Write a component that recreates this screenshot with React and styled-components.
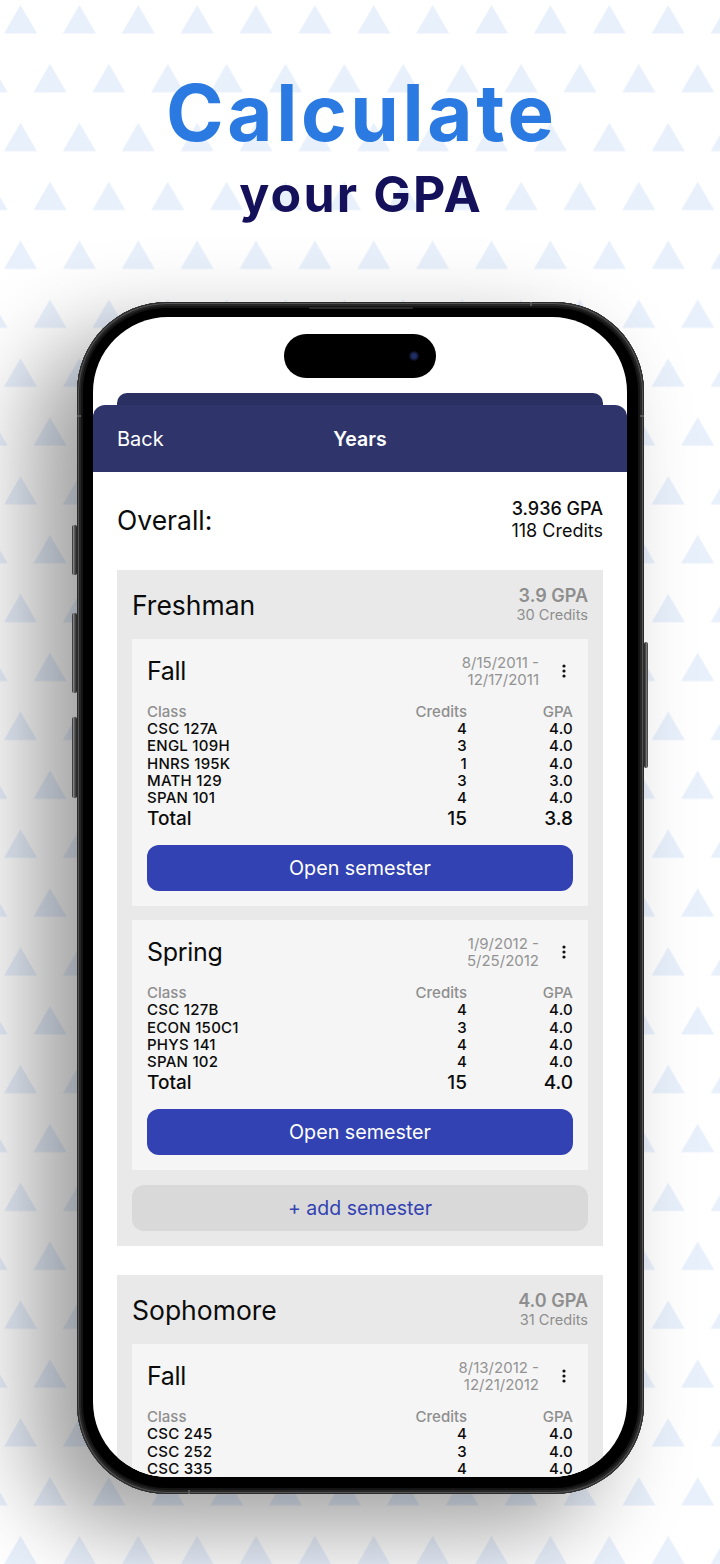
import React from 'react';
import styled, { createGlobalStyle } from 'styled-components';

const GlobalStyle = createGlobalStyle`
    html, body {
        margin: 0;
        padding: 0;
        background: #fff;
    }
`;

const Page = styled.div`
    position: relative;
    width: 720px;
    height: 1564px;
    overflow: hidden;
    background: #fff;
    font-family: Inter, "Liberation Sans", sans-serif;
    color: #0b0b0b;
`;

const Pattern = styled.svg`
    position: absolute;
    top: 0;
    left: 0;
    width: 720px;
    height: 1564px;
`;

const Hero = styled.header`
    position: relative;
    height: 302px;
    display: flex;
    flex-direction: column;
    align-items: center;
    padding-top: 71px;
    box-sizing: border-box;
`;

const Title = styled.h1`
    margin: 0;
    padding-left: 3.6px;
    font-size: 78px;
    line-height: 84px;
    font-weight: 700;
    color: #2a7ae2;
    letter-spacing: 3.6px;
`;

const Subtitle = styled.h2`
    margin: 12px 0 0;
    padding-left: 2.2px;
    font-size: 50px;
    line-height: 54px;
    font-weight: 700;
    color: #14115a;
    letter-spacing: 2.2px;
`;

const Phone = styled.div`
    position: relative;
    width: 567px;
    height: 1192px;
    margin-left: 77px;
    padding: 15px 17px 17px 16px;
    box-sizing: border-box;
    background: #000;
    border-radius: 90px;
    box-shadow:
        inset 0 0 0 1px #2a2a2a,
        inset 0 0 0 2px #555,
        inset 0 0 0 4px #262626,
        inset 0 0 0 6px #141414,
        -45px 35px 90px rgba(0, 0, 0, 0.38);
`;

const SideButton = styled.span`
    position: absolute;
    width: ${(p) => (p.$right ? 4 : 5)}px;
    top: ${(p) => p.$top}px;
    height: ${(p) => p.$height}px;
    ${(p) => (p.$right ? 'right: -4px;' : 'left: -5px;')}
    background: linear-gradient(${(p) => (p.$right ? '270deg' : '90deg')}, #111 0, #8a8a8a 25%, #4a4a4a 60%, #222 100%);
    border-radius: 2px;
`;

const AntennaBand = styled.span`
    position: absolute;
    top: ${(p) => p.$top}px;
    left: ${(p) => p.$left}px;
    width: ${(p) => p.$w}px;
    height: ${(p) => p.$h}px;
    background: #585858;
`;

const Slit = styled.span`
    position: absolute;
    top: 5px;
    left: 232px;
    width: 104px;
    height: 2px;
    border-radius: 1px;
    background: #2b2b2b;
`;

const Screen = styled.div`
    height: 100%;
    background: #fff;
    border-radius: 75px;
    overflow: hidden;
`;

const StatusArea = styled.div`
    height: 76px;
    padding-top: 17px;
    box-sizing: border-box;
`;

const Island = styled.div`
    position: relative;
    width: 152px;
    height: 44px;
    margin: 0 auto;
    background: #000;
    border-radius: 22px;
`;

const Camera = styled.span`
    position: absolute;
    top: 17px;
    right: 17px;
    width: 10px;
    height: 10px;
    border-radius: 50%;
    background: radial-gradient(circle, #1f2e66 0 30%, #0c0e20 65%, #050507 100%);
`;

const BackTab = styled.div`
    height: 12px;
    margin: 0 24px;
    background: #2a3062;
    border-radius: 10px 10px 0 0;
`;

const NavBar = styled.nav`
    position: relative;
    height: 67px;
    display: flex;
    align-items: center;
    justify-content: center;
    background: #2f356b;
    border-radius: 12px 12px 0 0;
    color: #fff;
    font-size: 20px;
`;

const BackLink = styled.span`
    position: absolute;
    left: 24px;
`;

const NavTitle = styled.span`
    font-size: 19.5px;
    font-weight: 600;
`;

const Overall = styled.section`
    height: 98px;
    padding: 0 24px 3px;
    box-sizing: border-box;
    display: flex;
    align-items: center;
    justify-content: space-between;
`;

const OverallLabel = styled.span`
    font-size: 26.5px;
`;

const Summary = styled.div`
    text-align: right;
    font-size: 18px;
    line-height: 22px;
`;

const SummaryGpa = styled.div`
    font-weight: 500;
`;

const Content = styled.div`
    padding: 0 24px;
    display: flex;
    flex-direction: column;
    gap: 29px;
`;

const YearCard = styled.section`
    background: #e9e9e9;
    padding: 0 15px 15px;
    display: flex;
    flex-direction: column;
`;

const YearHeader = styled.div`
    height: 69px;
    display: flex;
    align-items: center;
    justify-content: space-between;
`;

const YearName = styled.span`
    font-size: 26.5px;
`;

const YearStats = styled.div`
    text-align: right;
    color: #8e8e8e;
`;

const YearGpa = styled.div`
    font-size: 18px;
    line-height: 21px;
    font-weight: 600;
`;

const YearCredits = styled.div`
    font-size: 14.6px;
    line-height: 19px;
`;

const SemesterList = styled.div`
    display: flex;
    flex-direction: column;
    gap: 14px;
`;

const SemesterCard = styled.div`
    background: #f5f5f5;
    padding: 14.5px 15px 15px;
`;

const SemesterHeader = styled.div`
    height: 34px;
    display: flex;
    align-items: center;
    margin-bottom: 15px;
`;

const SemesterName = styled.span`
    flex: 1;
    font-size: 25px;
    letter-spacing: -0.3px;
`;

const Dates = styled.span`
    font-size: 15px;
    line-height: 17px;
    text-align: right;
    color: #939393;
`;

const MoreButton = styled.span`
    width: 34px;
    display: flex;
    justify-content: flex-end;
    padding-right: 7px;
    box-sizing: border-box;
`;

const Row = styled.div`
    display: grid;
    grid-template-columns: 1fr 101px 106px;
    height: 17.4px;
    line-height: 17.4px;
    font-size: 15px;
    letter-spacing: ${(p) => (p.$head ? 0 : 0.25)}px;
    font-weight: 450;
    color: ${(p) => (p.$head ? '#8e8e8e' : '#0b0b0b')};
`;

const TotalRow = styled(Row)`
    height: 24.5px;
    line-height: 24.5px;
    font-size: 19px;
    font-weight: 550;
    letter-spacing: 0;
`;

const NumCell = styled.span`
    text-align: right;
`;

const OpenButton = styled.button`
    display: block;
    width: 100%;
    height: 46px;
    margin-top: 14px;
    border: none;
    border-radius: 12px;
    background: #3242b2;
    color: #fff;
    font-family: inherit;
    font-size: 19.7px;
`;

const AddButton = styled.button`
    display: block;
    width: 100%;
    height: 46px;
    margin-top: 15px;
    border: none;
    border-radius: 12px;
    background: #d9d9d9;
    color: #3242b2;
    font-family: inherit;
    font-size: 19.5px;
`;

const years = [
    {
        name: 'Freshman',
        gpa: '3.9 GPA',
        credits: '30 Credits',
        semesters: [
            {
                name: 'Fall',
                dates: ['8/15/2011 -', '12/17/2011'],
                classes: [
                    ['CSC 127A', 4, '4.0'],
                    ['ENGL 109H', 3, '4.0'],
                    ['HNRS 195K', 1, '4.0'],
                    ['MATH 129', 3, '3.0'],
                    ['SPAN 101', 4, '4.0'],
                ],
                total: [15, '3.8'],
            },
            {
                name: 'Spring',
                dates: ['1/9/2012 -', '5/25/2012'],
                classes: [
                    ['CSC 127B', 4, '4.0'],
                    ['ECON 150C1', 3, '4.0'],
                    ['PHYS 141', 4, '4.0'],
                    ['SPAN 102', 4, '4.0'],
                ],
                total: [15, '4.0'],
            },
        ],
        canAdd: true,
    },
    {
        name: 'Sophomore',
        gpa: '4.0 GPA',
        credits: '31 Credits',
        semesters: [
            {
                name: 'Fall',
                dates: ['8/13/2012 -', '12/21/2012'],
                classes: [
                    ['CSC 245', 4, '4.0'],
                    ['CSC 252', 3, '4.0'],
                    ['CSC 335', 4, '4.0'],
                ],
            },
        ],
    },
];

const Triangles = () => (
    <Pattern viewBox="0 0 720 1564" aria-hidden="true">
        <defs>
            <pattern id="tri" x="4" y="5" width="58.88" height="117.76" patternUnits="userSpaceOnUse">
                <polygon points="16.5,0 33,28.5 0,28.5" fill="#e8f0fc" />
                <polygon points="46,58.88 62.5,87.38 29.5,87.38" fill="#e8f0fc" />
                <polygon points="-12.88,58.88 3.62,87.38 -29.38,87.38" fill="#e8f0fc" />
            </pattern>
        </defs>
        <rect width="720" height="1564" fill="url(#tri)" />
    </Pattern>
);

const Dots = () => (
    <svg width="4" height="14" viewBox="0 0 4 14">
        <circle cx="2" cy="2" r="1.6" fill="#111" />
        <circle cx="2" cy="7" r="1.6" fill="#111" />
        <circle cx="2" cy="12" r="1.6" fill="#111" />
    </svg>
);

const Semester = ({ semester }) => (
    <SemesterCard>
        <SemesterHeader>
            <SemesterName>{semester.name}</SemesterName>
            <Dates>
                {semester.dates[0]}
                <br />
                {semester.dates[1]}
            </Dates>
            <MoreButton>
                <Dots />
            </MoreButton>
        </SemesterHeader>
        <Row $head>
            <span>Class</span>
            <NumCell>Credits</NumCell>
            <NumCell>GPA</NumCell>
        </Row>
        {semester.classes.map(([name, credits, gpa]) => (
            <Row key={name}>
                <span>{name}</span>
                <NumCell>{credits}</NumCell>
                <NumCell>{gpa}</NumCell>
            </Row>
        ))}
        {semester.total && (
            <>
                <TotalRow>
                    <span>Total</span>
                    <NumCell>{semester.total[0]}</NumCell>
                    <NumCell>{semester.total[1]}</NumCell>
                </TotalRow>
                <OpenButton>Open semester</OpenButton>
            </>
        )}
    </SemesterCard>
);

const App = () => (
    <Page>
        <GlobalStyle />
        <Triangles />
        <Hero>
            <Title>Calculate</Title>
            <Subtitle>your GPA</Subtitle>
        </Hero>
        <Phone>
            <SideButton $top={223} $height={50} />
            <SideButton $top={311} $height={80} />
            <SideButton $top={415} $height={81} />
            <SideButton $right $top={340} $height={126} />
            <Slit />
            <AntennaBand $top={113} $left={0} $w={4} $h={2} />
            <AntennaBand $top={113} $left={563} $w={4} $h={2} />
            <AntennaBand $top={0} $left={453} $w={2} $h={4} />
            <AntennaBand $top={1188} $left={111} $w={2} $h={4} />
            <Screen>
                <StatusArea>
                    <Island>
                        <Camera />
                    </Island>
                </StatusArea>
                <BackTab />
                <NavBar>
                    <BackLink>Back</BackLink>
                    <NavTitle>Years</NavTitle>
                </NavBar>
                <Overall>
                    <OverallLabel>Overall:</OverallLabel>
                    <Summary>
                        <SummaryGpa>3.936 GPA</SummaryGpa>
                        <div>118 Credits</div>
                    </Summary>
                </Overall>
                <Content>
                    {years.map((year) => (
                        <YearCard key={year.name}>
                            <YearHeader>
                                <YearName>{year.name}</YearName>
                                <YearStats>
                                    <YearGpa>{year.gpa}</YearGpa>
                                    <YearCredits>{year.credits}</YearCredits>
                                </YearStats>
                            </YearHeader>
                            <SemesterList>
                                {year.semesters.map((semester) => (
                                    <Semester key={semester.name} semester={semester} />
                                ))}
                            </SemesterList>
                            {year.canAdd && <AddButton>+ add semester</AddButton>}
                        </YearCard>
                    ))}
                </Content>
            </Screen>
        </Phone>
    </Page>
);

export default App;
